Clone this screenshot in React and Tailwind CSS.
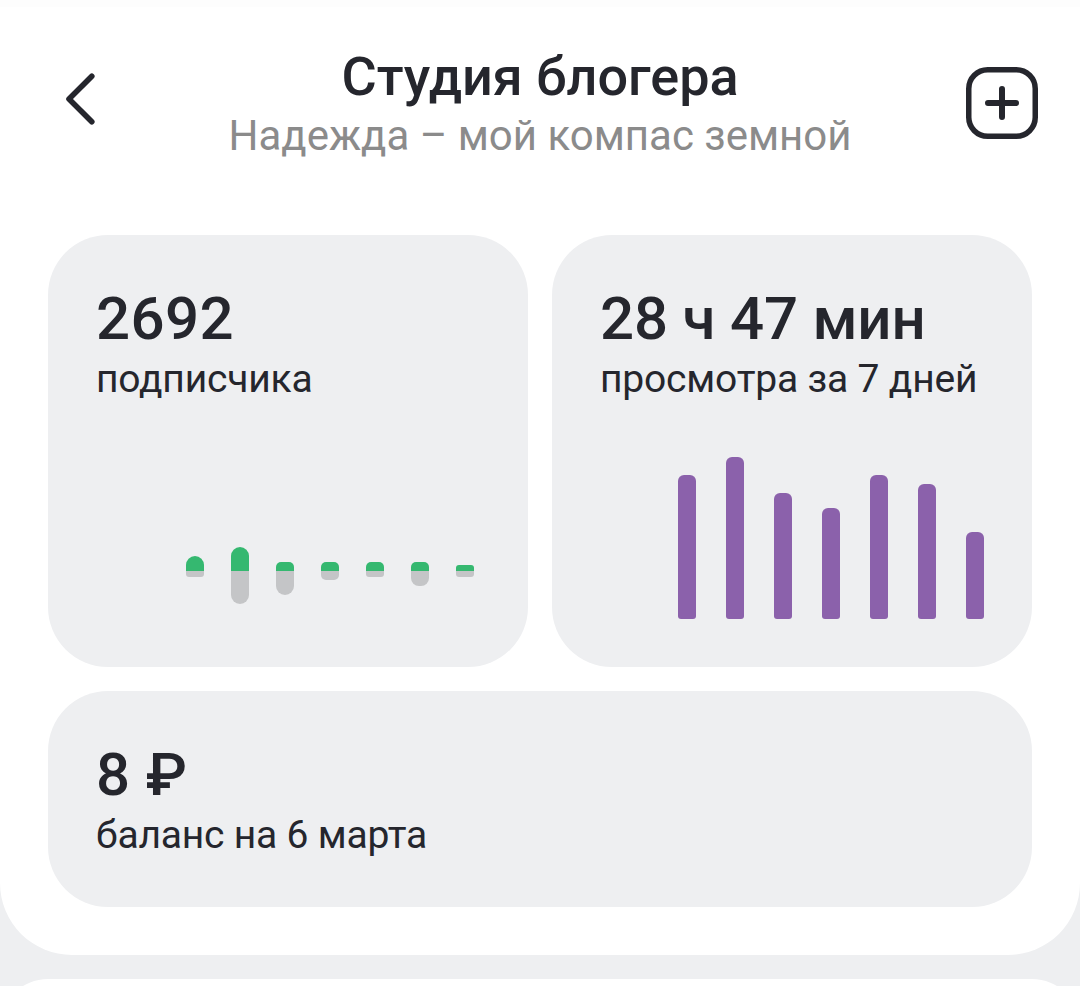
const subscribers = [
  { up: 15, down: 6, shape: 'rounded-t-[9px]', tail: 'rounded-b-[3px]' },
  { up: 24, down: 33, shape: 'rounded-t-[9px]', tail: 'rounded-b-[9px]' },
  { up: 9, down: 24, shape: 'rounded-t-[5px]', tail: 'rounded-b-[9px]' },
  { up: 9, down: 9, shape: 'rounded-t-[5px]', tail: 'rounded-b-[5px]' },
  { up: 9, down: 6, shape: 'rounded-t-[5px]', tail: 'rounded-b-[3px]' },
  { up: 9, down: 15, shape: 'rounded-t-[5px]', tail: 'rounded-b-[8px]' },
  { up: 6, down: 6, shape: 'rounded-t-[3px]', tail: 'rounded-b-[3px]' },
]

const watchTime = [144, 162, 126, 111, 144, 135, 87]

function StatCard({ value, label, tracking = 'tracking-[0.4px]', className = '', children }) {
  return (
    <section className={`flex flex-col rounded-[60px] bg-[#eeeff1] px-12 pt-[49px] pb-12 ${className}`}>
      <p className={`whitespace-nowrap text-[60px] font-medium leading-[70px] ${tracking}`}>{value}</p>
      <p className="mt-[2px] whitespace-nowrap text-[39px] leading-[46px] tracking-[-0.19px]">{label}</p>
      {children}
    </section>
  )
}

function SubscribersChart() {
  return (
    <div className="mt-auto mr-[6px] flex h-[72px] justify-end gap-[27px]">
      {subscribers.map((day, i) => (
        <div key={i} className="flex w-[18px] flex-col">
          <div className="flex h-6 items-end">
            <div className={`w-full bg-[#35b870] ${day.shape}`} style={{ height: day.up }} />
          </div>
          <div className={`w-full bg-[#c4c5c7] ${day.tail}`} style={{ height: day.down }} />
        </div>
      ))}
    </div>
  )
}

function WatchTimeChart() {
  return (
    <div className="mt-auto flex items-end justify-end gap-[30px]">
      {watchTime.map((height, i) => (
        <div key={i} className="w-[18px] rounded-t-[6px] rounded-b-[3px] bg-[#8b61ab]" style={{ height }} />
      ))}
    </div>
  )
}

export default function App() {
  return (
    <div className="h-[986px] w-[1080px] overflow-hidden bg-[#eeeff1] font-['Roboto',sans-serif] text-[#25262d]">
      <main className="h-[955px] rounded-b-[72px] bg-white">
        <div className="h-[7px] bg-[#fdfdfd]" />

        <header className="flex h-[228px] justify-between pt-[38px] pr-[42px] pl-[60px]">
          <button type="button" aria-label="Назад" className="mt-[22px] h-[64px] w-[54px]">
            <svg width="54" height="64" viewBox="0 0 54 64" fill="none" stroke="currentColor" strokeWidth="5.6" strokeLinecap="round" strokeLinejoin="round">
              <path d="M31.8 9.2 L9 32 L31.8 54.8" />
            </svg>
          </button>

          <div className="flex flex-col items-center">
            <h1 className="text-[54px] font-medium leading-[63px]">Студия блогера</h1>
            <p className="mt-[3px] text-[42px] leading-[49px] text-[#8b8b8b]">Надежда – мой компас земной</p>
          </div>

          <button type="button" aria-label="Добавить" className="mt-[22px] h-[72px] w-[72px]">
            <svg width="72" height="72" viewBox="0 0 72 72" fill="none" stroke="currentColor" strokeLinecap="round">
              <rect x="2.75" y="2.75" width="66.5" height="66.5" rx="19" strokeWidth="5.5" />
              <path d="M36 22 V50 M22 36 H50" strokeWidth="6" />
            </svg>
          </button>
        </header>

        <div className="grid grid-cols-2 gap-6 px-12">
          <StatCard value="2692" label="подписчика" className="h-[432px]">
            <SubscribersChart />
          </StatCard>
          <StatCard value="28 ч 47 мин" label="просмотра за 7 дней" tracking="tracking-[-0.2px]" className="h-[432px]">
            <WatchTimeChart />
          </StatCard>
          <StatCard value="8 ₽" label="баланс на 6 марта" className="col-span-2 h-[216px]" />
        </div>
      </main>

      <div className="mt-6 h-24 rounded-t-[48px] bg-white" />
    </div>
  )
}
